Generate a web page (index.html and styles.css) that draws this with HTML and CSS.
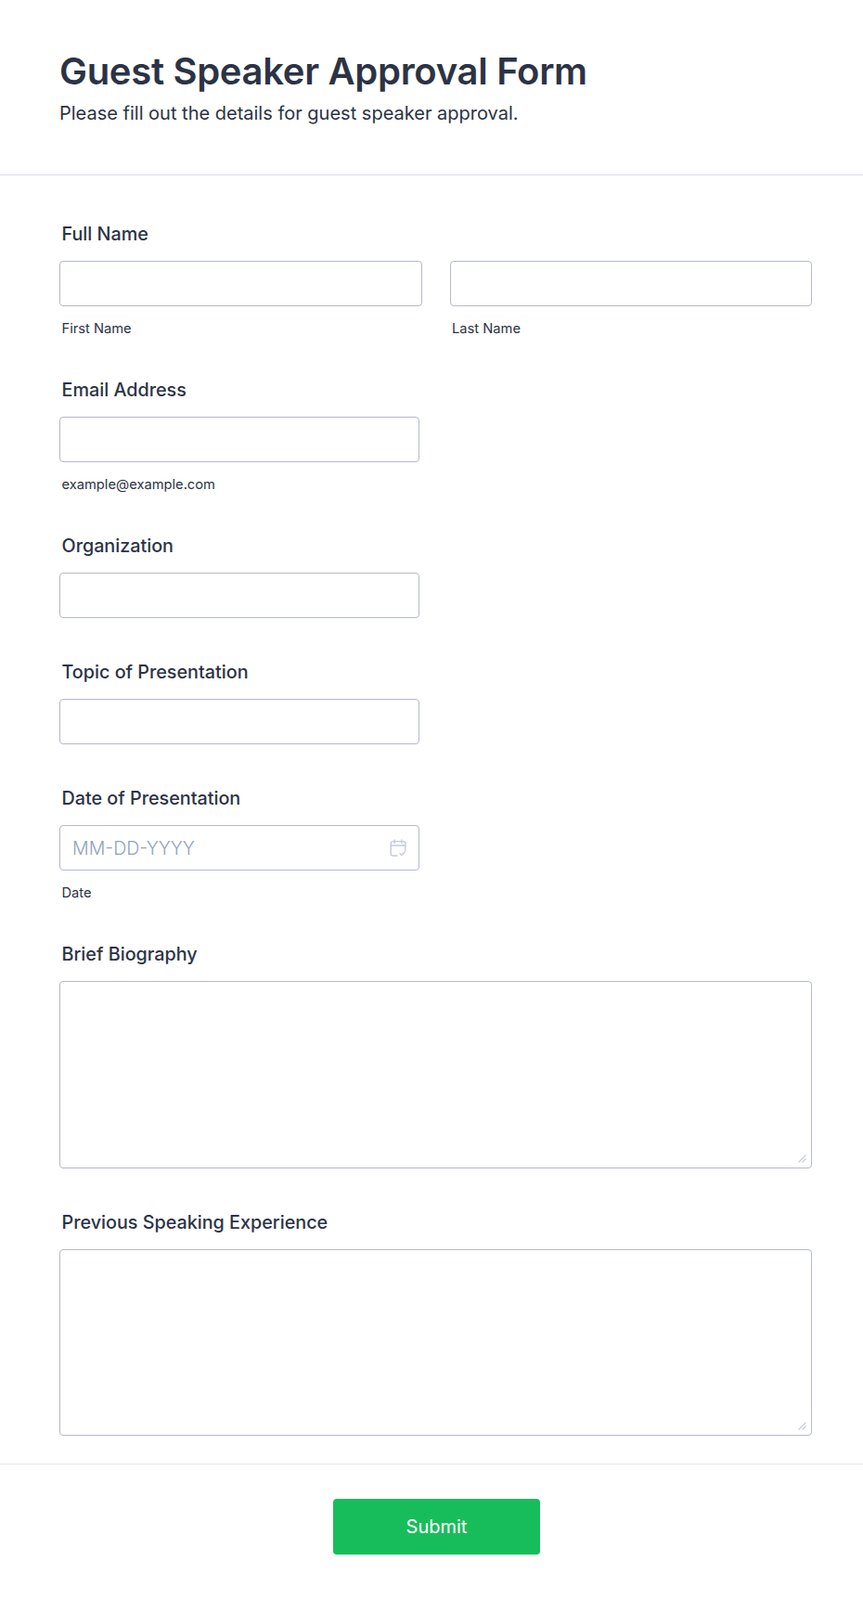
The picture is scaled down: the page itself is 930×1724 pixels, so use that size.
FILE: index.html
```html
<!DOCTYPE html>
<html lang="en">
<head>
<meta charset="utf-8">
<title>Guest Speaker Approval Form</title>
<link rel="stylesheet" href="styles.css">
</head>
<body>
<form class="form">
  <header class="form-header">
    <h1 class="form-title">Guest Speaker Approval Form</h1>
    <p class="form-subtitle">Please fill out the details for guest speaker approval.</p>
  </header>
  <main class="form-body">
    <div class="field">
      <div class="field-label">Full Name</div>
      <div class="name-row">
        <label class="name-col">
          <input class="input input-full" type="text">
          <span class="sublabel">First Name</span>
        </label>
        <label class="name-col">
          <input class="input input-full" type="text">
          <span class="sublabel">Last Name</span>
        </label>
      </div>
    </div>
    <label class="field">
      <span class="field-label">Email Address</span>
      <input class="input input-half" type="text">
      <span class="sublabel">example@example.com</span>
    </label>
    <label class="field">
      <span class="field-label">Organization</span>
      <input class="input input-half" type="text">
    </label>
    <label class="field">
      <span class="field-label">Topic of Presentation</span>
      <input class="input input-half" type="text">
    </label>
    <label class="field">
      <span class="field-label">Date of Presentation</span>
      <span class="date-wrap">
        <input class="input input-date" type="text" placeholder="MM-DD-YYYY">
        <svg class="date-icon" viewBox="0 0 18 19" width="18" height="19" fill="none" stroke="#c3cad9" stroke-width="1.4" stroke-linecap="round" stroke-linejoin="round" aria-hidden="true">
          <path d="M8 18H3.2a2 2 0 0 1-2-2V4.6a2 2 0 0 1 2-2h11.6a2 2 0 0 1 2 2v7.6"/>
          <path d="M1.2 7h15.6"/>
          <path d="M5.2 1v3.4"/>
          <path d="M12.8 1v3.4"/>
          <path d="M11 15.8l1.8 1.8 3.4-3.6"/>
        </svg>
      </span>
      <span class="sublabel">Date</span>
    </label>
    <label class="field">
      <span class="field-label">Brief Biography</span>
      <span class="textarea-wrap">
        <textarea class="input textarea"></textarea>
        <svg class="grip" viewBox="0 0 9 9" width="9" height="9" fill="none" stroke="#c6cad8" stroke-width="1.1" aria-hidden="true">
          <path d="M0.5 8.5L8.5 0.5"/>
          <path d="M4.5 8.5L8.5 4.5"/>
        </svg>
      </span>
    </label>
    <label class="field">
      <span class="field-label">Previous Speaking Experience</span>
      <span class="textarea-wrap">
        <textarea class="input textarea"></textarea>
        <svg class="grip" viewBox="0 0 9 9" width="9" height="9" fill="none" stroke="#c6cad8" stroke-width="1.1" aria-hidden="true">
          <path d="M0.5 8.5L8.5 0.5"/>
          <path d="M4.5 8.5L8.5 4.5"/>
        </svg>
      </span>
    </label>
  </main>
  <footer class="form-footer">
    <button class="submit" type="button">Submit</button>
  </footer>
</form>
</body>
</html>
```
FILE: styles.css
```css
* {
  box-sizing: border-box;
}

html,
body {
  margin: 0;
  padding: 0;
  background: #fff;
}

body {
  font-family: Inter, "Liberation Sans", sans-serif;
  color: #2c3345;
}

.form {
  display: block;
  width: 930px;
  height: 1724px;
}

.form-header {
  height: 189px;
  padding: 50px 64px 0;
  border-bottom: 1px solid #d8dde6;
}

.form-title {
  margin: 0;
  font-size: 40px;
  line-height: 53px;
  font-weight: 600;
  letter-spacing: -0.3px;
}

.form-subtitle {
  margin: 4px 0 0;
  font-size: 20px;
  line-height: 30px;
  font-weight: 400;
}

.form-body {
  display: flex;
  flex-direction: column;
  gap: 47px;
  padding: 52px 55px 30px 64px;
  border-bottom: 1px solid #e3e8f0;
}

.field {
  display: block;
}

.field-label {
  display: block;
  height: 40px;
  padding-left: 2.5px;
  font-size: 19.75px;
  line-height: 22px;
  font-weight: 450;
}

.name-row {
  display: flex;
  gap: 30px;
}

.name-col {
  display: block;
  flex: 1 1 0;
}

.input {
  display: block;
  height: 49px;
  padding: 0 13px;
  background: #fff;
  border: 1px solid #b4b9cb;
  border-radius: 4px;
  font: 400 19.6px Inter, "Liberation Sans", sans-serif;
  color: #2c3345;
  outline: none;
}

.input-full {
  width: 100%;
}

.input-half,
.input-date {
  width: 388px;
}

.input::placeholder {
  color: #8fa3bb;
  font-weight: 300;
  opacity: 1;
}

.date-wrap {
  display: block;
  position: relative;
  width: 388px;
}

.date-icon {
  position: absolute;
  top: 15px;
  right: 14px;
}

.sublabel {
  display: block;
  height: 32px;
  padding: 16px 0 0 2.5px;
  font-size: 14.7px;
  line-height: 17px;
}

.textarea-wrap {
  display: block;
  position: relative;
}

.textarea {
  width: 100%;
  height: 201.5px;
  padding: 10px 13px;
  resize: none;
}

.grip {
  position: absolute;
  right: 6px;
  bottom: 6px;
}

.form-footer {
  display: flex;
  justify-content: center;
  padding: 37px 0 0 11px;
}

.submit {
  width: 223px;
  height: 60px;
  border: 0;
  border-radius: 4px;
  background: #18bd5b;
  color: #fff;
  font: 400 20px Inter, "Liberation Sans", sans-serif;
}
```
